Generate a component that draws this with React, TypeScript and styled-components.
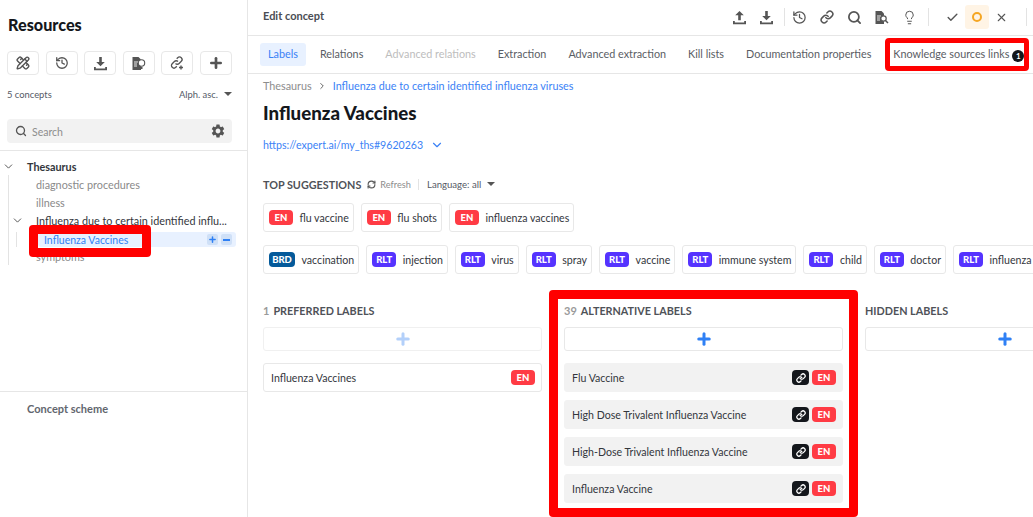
import React from 'react'
import styled, { createGlobalStyle } from 'styled-components'
import {
  Check,
  ChevronDown,
  ChevronRight,
  History,
  Lightbulb,
  Link,
  PencilRuler,
  Plus,
  RefreshCw,
  Search,
  X,
} from 'lucide-react'
import { MdSettings } from 'react-icons/md'

const TABS = [
  { title: 'Labels', active: true },
  { title: 'Relations' },
  { title: 'Advanced relations', disabled: true },
  { title: 'Extraction' },
  { title: 'Advanced extraction' },
  { title: 'Kill lists' },
  { title: 'Documentation properties' },
]

const SUGGESTIONS_LANG = ['flu vaccine', 'flu shots', 'influenza vaccines']

const SUGGESTIONS_RELATED = [
  { tag: 'BRD', title: 'vaccination' },
  { tag: 'RLT', title: 'injection' },
  { tag: 'RLT', title: 'virus' },
  { tag: 'RLT', title: 'spray' },
  { tag: 'RLT', title: 'vaccine' },
  { tag: 'RLT', title: 'immune system' },
  { tag: 'RLT', title: 'child' },
  { tag: 'RLT', title: 'doctor' },
  { tag: 'RLT', title: 'influenza' },
]

const ALTERNATIVE_LABELS = [
  'Flu Vaccine',
  'High Dose Trivalent Influenza Vaccine',
  'High-Dose Trivalent Influenza Vaccine',
  'Influenza Vaccine',
]

const TAG_COLORS: Record<string, string> = {
  EN: '#ff3b44',
  RLT: '#5533ff',
  BRD: '#045a9a',
}

const GlobalStyle = createGlobalStyle`
  html, body {
    margin: 0;
    padding: 0;
    background: #fff;
  }
  body {
    font-family: 'Lato', 'Open Sans', sans-serif;
    color: #1c1f24;
  }
  * {
    box-sizing: border-box;
  }
`

const Page = styled.div`
  position: relative;
  display: flex;
  width: 1033px;
  height: 517px;
  overflow: hidden;
`

const Sidebar = styled.aside`
  display: flex;
  flex-direction: column;
  flex: 0 0 248px;
  border-right: 1px solid #e6e6e6;
`

const SidebarTop = styled.div`
  display: flex;
  flex-direction: column;
  height: 151px;
  padding: 14px 15px 0 7px;
  border-bottom: 1px solid #e6e6e6;
`

const SidebarTitle = styled.h2`
  margin: 0 0 16px 1px;
  font-size: 16.2px;
  line-height: 21px;
  font-weight: 900;
  color: #14171c;
`

const ToolRow = styled.div`
  display: flex;
  gap: 6.6px;
`

const ToolButton = styled.button`
  display: flex;
  align-items: center;
  justify-content: center;
  width: 32px;
  height: 24px;
  padding: 0;
  border: 1px solid #e8e8e8;
  border-radius: 4px;
  background: #fff;
  color: #555;
`

const CountRow = styled.div`
  display: flex;
  align-items: center;
  justify-content: space-between;
  height: 14px;
  margin-top: 12px;
  font-size: 9.4px;
  color: #555a66;
`

const Sort = styled.span`
  display: flex;
  align-items: center;
  gap: 6px;
`

const Caret = styled.span`
  width: 0;
  height: 0;
  border-left: 4px solid transparent;
  border-right: 4px solid transparent;
  border-top: 4px solid #555;
`

const SearchBox = styled.div`
  display: flex;
  align-items: center;
  height: 24px;
  margin-top: 18px;
  padding: 0 6px 0 8px;
  border-radius: 4px;
  background: #f2f2f2;
  color: #555;
`

const SearchText = styled.span`
  flex: 1;
  margin-left: 5px;
  padding-top: 1px;
  font-size: 10.5px;
  color: #8d8d8d;
`

const Tree = styled.div`
  display: flex;
  flex-direction: column;
  height: 241px;
  padding-top: 6px;
  border-bottom: 1px solid #e6e6e6;
`

const TreeRow = styled.div<{ $strong?: boolean; $dim?: boolean; $indent: number }>`
  display: flex;
  align-items: center;
  height: 18px;
  padding-left: ${({ $indent }) => $indent}px;
  font-size: 10.8px;
  font-weight: ${({ $strong }) => ($strong ? 700 : 400)};
  color: ${({ $dim }) => ($dim ? '#8a8a8a' : '#33363c')};
  white-space: nowrap;
`

const TreeChevron = styled.span<{ $slot: number }>`
  display: flex;
  flex: 0 0 ${({ $slot }) => $slot}px;
  color: #555;
`

const TreeGroup = styled.div<{ $left: number }>`
  margin-left: ${({ $left }) => $left}px;
  border-left: 1px solid #e3e3e3;
`

const SelectedRow = styled.div`
  display: flex;
  align-items: center;
  justify-content: space-between;
  height: 15px;
  margin: 3px 11px 0 21px;
  padding: 0 4px 0 6px;
  border-radius: 3px;
  background: #e8f1ff;
  font-size: 10.5px;
  color: #2f80f5;
`

const RowActions = styled.span`
  display: flex;
  gap: 3px;
`

const RowAction = styled.span`
  display: flex;
  align-items: center;
  justify-content: center;
  width: 11px;
  height: 11px;
  border-radius: 2px;
  background: #cfe0f7;
  color: #2f80f5;
`

const Minus = styled.span`
  width: 7px;
  height: 2px;
  background: #2f80f5;
`

const SchemeTitle = styled.div`
  padding: 10px 0 0 27px;
  font-size: 11px;
  font-weight: 700;
  color: #62666e;
`

const Main = styled.main`
  display: flex;
  flex-direction: column;
  flex: 1;
  min-width: 0;
`

const TopBar = styled.div`
  display: flex;
  align-items: center;
  justify-content: space-between;
  flex: 0 0 36px;
  padding: 0 0 1px 15px;
  border-bottom: 1px solid #e6e6e6;
`

const TopTitle = styled.span`
  padding-bottom: 3px;
  font-size: 11px;
  font-weight: 700;
  color: #4a4d54;
`

const TopTools = styled.div`
  display: flex;
  align-items: center;
  height: 100%;
  padding-right: 6px;
`

const TopIcon = styled.span<{ $width?: number }>`
  display: flex;
  align-items: center;
  justify-content: center;
  width: ${({ $width }) => $width ?? 27.5}px;
  height: 24px;
  color: #555;
`

const StatusActive = styled.span`
  display: flex;
  align-items: center;
  justify-content: center;
  width: 24px;
  height: 24px;
  border-radius: 3px;
  background: #fff4e5;
`

const StatusRing = styled.span`
  width: 10px;
  height: 10px;
  border: 2px solid #f5a623;
  border-radius: 50%;
`

const ToolDivider = styled.span<{ $gapLeft: number; $gapRight: number }>`
  width: 1px;
  height: 18px;
  margin: 0 ${({ $gapRight }) => $gapRight}px 0 ${({ $gapLeft }) => $gapLeft}px;
  background: #e3e3e3;
`

const Tabs = styled.nav`
  display: flex;
  align-items: center;
  gap: 6px;
  flex: 0 0 38px;
  padding-left: 12px;
  border-bottom: 1px solid #e6e6e6;
  white-space: nowrap;
`

const Tab = styled.span<{ $active?: boolean; $disabled?: boolean }>`
  display: flex;
  align-items: center;
  height: 23px;
  padding: 0 8px 3px;
  border-radius: 3px;
  font-size: 10.8px;
  background: ${({ $active }) => ($active ? '#e8f1ff' : 'transparent')};
  color: ${({ $active, $disabled }) => ($active ? '#3b82f6' : $disabled ? '#bdbdbd' : '#5a5d64')};
`

const TabCount = styled.span`
  display: flex;
  align-items: center;
  justify-content: center;
  width: 12px;
  height: 12px;
  margin: 5px 0 0 3px;
  border-radius: 50%;
  background: #14171c;
  color: #fff;
  font-size: 8px;
  font-weight: 700;
`

const Content = styled.div`
  display: flex;
  flex-direction: column;
  padding: 4px 0 0 15px;
`

const Breadcrumb = styled.div`
  display: flex;
  align-items: center;
  height: 15px;
  font-size: 10.8px;
  color: #8d8d8d;
`

const CrumbSeparator = styled.span`
  display: flex;
  margin: 0 6px 0 5px;
  color: #666;
`

const CrumbLink = styled.span`
  color: #3b82f6;
`

const ConceptTitle = styled.h1`
  margin: 8px 0 0;
  font-size: 18.7px;
  line-height: 24px;
  font-weight: 900;
  color: #14171c;
`

const UrlRow = styled.div`
  display: flex;
  align-items: center;
  gap: 7px;
  height: 16px;
  margin-top: 12px;
  font-size: 10.6px;
  color: #3b82f6;
`

const SuggestionsHeader = styled.div`
  display: flex;
  align-items: center;
  height: 16px;
  margin-top: 23px;
`

const SectionTitle = styled.span`
  font-size: 10.8px;
  font-weight: 700;
  color: #4f5258;
  white-space: nowrap;
`

const Refresh = styled.span`
  display: flex;
  align-items: center;
  gap: 4px;
  margin-left: 6px;
  font-size: 9.2px;
  color: #8d8d8d;
`

const Language = styled.span`
  display: flex;
  align-items: center;
  gap: 6px;
  margin-left: 7px;
  padding-left: 8px;
  border-left: 1px solid #e3e3e3;
  font-size: 9.6px;
  color: #555a66;
`

const ChipRow = styled.div<{ $top: number }>`
  display: flex;
  gap: 7px;
  margin-top: ${({ $top }) => $top}px;
`

const Chip = styled.div`
  display: flex;
  align-items: center;
  flex: none;
  gap: 6.5px;
  height: 29px;
  padding: 0 4px 0 5px;
  border: 1px solid #e8e8e8;
  border-radius: 3px;
  font-size: 10.6px;
  color: #33363c;
  white-space: nowrap;
`

const Tag = styled.span<{ $kind: string }>`
  display: flex;
  align-items: center;
  justify-content: center;
  flex: none;
  width: ${({ $kind }) => ($kind === 'BRD' ? 26 : 24)}px;
  height: 15px;
  padding-bottom: 1px;
  border-radius: 4px;
  background: ${({ $kind }) => TAG_COLORS[$kind]};
  color: #fff;
  font-size: 9.5px;
  font-weight: 900;
`

const LinkTag = styled.span`
  display: flex;
  align-items: center;
  justify-content: center;
  flex: none;
  width: 17px;
  height: 15px;
  border-radius: 4px;
  background: #14171c;
  color: #fff;
`

const Columns = styled.div`
  display: flex;
  gap: 22px;
  margin-top: 28px;
`

const Column = styled.section`
  display: flex;
  flex-direction: column;
  flex: 0 0 279px;
`

const ColumnHeader = styled.div`
  display: flex;
  align-items: center;
  gap: 4px;
  height: 16px;
`

const ColumnCount = styled.span`
  font-size: 11px;
  font-weight: 700;
  color: #9a9a9a;
`

const AddButton = styled.div<{ $muted?: boolean }>`
  display: flex;
  align-items: center;
  justify-content: center;
  height: 24px;
  margin: 9px 0 12px;
  border: 1px solid ${({ $muted }) => ($muted ? '#f0f0f0' : '#e8e8e8')};
  border-radius: 3px;
  color: ${({ $muted }) => ($muted ? '#b3d0fa' : '#2f80f5')};
`

const LabelList = styled.div`
  display: flex;
  flex-direction: column;
  gap: 8px;
`

const LabelRow = styled.div<{ $filled?: boolean }>`
  display: flex;
  align-items: center;
  justify-content: space-between;
  height: 29px;
  padding: 0 6px 0 7px;
  border: 1px solid ${({ $filled }) => ($filled ? '#f2f2f2' : '#e8e8e8')};
  border-radius: 3px;
  background: ${({ $filled }) => ($filled ? '#f2f2f2' : '#fff')};
  font-size: 10.6px;
  color: #33363c;
`

const LabelTags = styled.span`
  display: flex;
  gap: 3px;
`

const Highlight = styled.div<{
  $left: number
  $top: number
  $width: number
  $height: number
  $border: number
}>`
  position: absolute;
  left: ${({ $left }) => $left}px;
  top: ${({ $top }) => $top}px;
  width: ${({ $width }) => $width}px;
  height: ${({ $height }) => $height}px;
  border: ${({ $border }) => $border}px solid #ff0000;
  border-radius: 4px;
  pointer-events: none;
`

const TrayIcon = ({ down }: { down?: boolean }) => (
  <svg width="15" height="15" viewBox="0 0 15 15" fill="currentColor">
    {down ? (
      <path d="M6.200 1h2.600v5h3l-4.300 4.200L3.200 6h3z" />
    ) : (
      <path d="M7.500 1l4.300 4.200h-3v5H6.200v-5h-3z" />
    )}
    <path d="M1 11h1.800v1.400h9.400V11H14v3.200H1z" />
  </svg>
)

const DocIcon = ({ bulb }: { bulb?: boolean }) => (
  <svg width="15" height="15" viewBox="0 0 15 15">
    <path d="M1.500 1h6l2.500 2.500V14H1.500z" fill="#555" />
    <path d="M3 6h4M3 8h3M3 10h3" stroke="#fff" strokeWidth="0.9" />
    {bulb ? (
      <>
        <circle cx="10.500" cy="7" r="3.200" fill="#fff" stroke="#555" strokeWidth="1.100" />
        <path d="M9.500 11h2v2h-2z" fill="#555" />
      </>
    ) : (
      <>
        <circle cx="9.500" cy="8.500" r="2.700" fill="#fff" stroke="#555" strokeWidth="1.200" />
        <path d="M11.500 10.500l2.500 2.500" stroke="#555" strokeWidth="1.500" />
      </>
    )}
  </svg>
)

const ChainAdd = () => (
  <svg width="16" height="16" viewBox="0 0 16 16" fill="none" stroke="#555" strokeWidth="1.300">
    <path d="M6.500 8.500a2.500 2.500 0 0 0 3.600 0l2.200-2.200a2.500 2.500 0 0 0-3.600-3.600L7.700 3.700" />
    <path d="M9 6.500a2.500 2.500 0 0 0-3.600 0L3.200 8.700a2.500 2.500 0 0 0 3.600 3.600l1-1" />
    <path d="M12 10.500v4M10 12.500h4" strokeWidth="1.400" />
  </svg>
)

const App = () => (
  <>
    <GlobalStyle />
    <Page>
      <Sidebar>
        <SidebarTop>
          <SidebarTitle>Resources</SidebarTitle>
          <ToolRow>
            <ToolButton>
              <PencilRuler size={14} strokeWidth={2.4} />
            </ToolButton>
            <ToolButton>
              <History size={14} strokeWidth={2.2} />
            </ToolButton>
            <ToolButton>
              <TrayIcon down />
            </ToolButton>
            <ToolButton>
              <DocIcon bulb />
            </ToolButton>
            <ToolButton>
              <ChainAdd />
            </ToolButton>
            <ToolButton>
              <Plus size={16} strokeWidth={4} />
            </ToolButton>
          </ToolRow>
          <CountRow>
            <span>5 concepts</span>
            <Sort>
              Alph. asc.
              <Caret />
            </Sort>
          </CountRow>
          <SearchBox>
            <Search size={12} strokeWidth={2.6} />
            <SearchText>Search</SearchText>
            <MdSettings size={16} />
          </SearchBox>
        </SidebarTop>
        <Tree>
          <TreeRow $indent={2} $strong>
            <TreeChevron $slot={25}>
              <ChevronDown size={13} strokeWidth={1.8} />
            </TreeChevron>
            Thesaurus
          </TreeRow>
          <TreeGroup $left={8}>
            <TreeRow $indent={27} $dim>
              diagnostic procedures
            </TreeRow>
            <TreeRow $indent={27} $dim>
              illness
            </TreeRow>
            <TreeRow $indent={2}>
              <TreeChevron $slot={25}>
                <ChevronDown size={13} strokeWidth={1.8} />
              </TreeChevron>
              Influenza due to certain identified influ...
            </TreeRow>
            <TreeGroup $left={7}>
              <SelectedRow>
                Influenza Vaccines
                <RowActions>
                  <RowAction>
                    <Plus size={9} strokeWidth={4} />
                  </RowAction>
                  <RowAction>
                    <Minus />
                  </RowAction>
                </RowActions>
              </SelectedRow>
            </TreeGroup>
            <TreeRow $indent={27} $dim>
              symptoms
            </TreeRow>
          </TreeGroup>
        </Tree>
        <SchemeTitle>Concept scheme</SchemeTitle>
      </Sidebar>
      <Main>
        <TopBar>
          <TopTitle>Edit concept</TopTitle>
          <TopTools>
            <TopIcon>
              <TrayIcon />
            </TopIcon>
            <TopIcon>
              <TrayIcon down />
            </TopIcon>
            <ToolDivider $gapLeft={3} $gapRight={1} />
            <TopIcon>
              <History size={15} strokeWidth={2} />
            </TopIcon>
            <TopIcon>
              <Link size={14} strokeWidth={2.6} />
            </TopIcon>
            <TopIcon>
              <Search size={15} strokeWidth={2.8} />
            </TopIcon>
            <TopIcon>
              <DocIcon />
            </TopIcon>
            <TopIcon>
              <Lightbulb size={15} strokeWidth={1.6} />
            </TopIcon>
            <ToolDivider $gapLeft={5} $gapRight={10} />
            <TopIcon $width={26}>
              <Check size={13} strokeWidth={2.6} />
            </TopIcon>
            <StatusActive>
              <StatusRing />
            </StatusActive>
            <TopIcon $width={24}>
              <X size={13} strokeWidth={2} />
            </TopIcon>
            <ToolDivider $gapLeft={13} $gapRight={0} />
          </TopTools>
        </TopBar>
        <Tabs>
          {TABS.map(({ active, disabled, title }) => (
            <Tab $active={active} $disabled={disabled} key={title}>
              {title}
            </Tab>
          ))}
          <Tab>
            Knowledge sources links
            <TabCount>1</TabCount>
          </Tab>
        </Tabs>
        <Content>
          <Breadcrumb>
            Thesaurus
            <CrumbSeparator>
              <ChevronRight size={10} strokeWidth={2.4} />
            </CrumbSeparator>
            <CrumbLink>Influenza due to certain identified influenza viruses</CrumbLink>
          </Breadcrumb>
          <ConceptTitle>Influenza Vaccines</ConceptTitle>
          <UrlRow>
            https://expert.ai/my_ths#9620263
            <ChevronDown size={14} strokeWidth={2} />
          </UrlRow>
          <SuggestionsHeader>
            <SectionTitle>TOP SUGGESTIONS</SectionTitle>
            <Refresh>
              <RefreshCw size={9} strokeWidth={3} color="#555" />
              Refresh
            </Refresh>
            <Language>
              Language: all
              <Caret />
            </Language>
          </SuggestionsHeader>
          <ChipRow $top={11}>
            {SUGGESTIONS_LANG.map((title) => (
              <Chip key={title}>
                <Tag $kind="EN">EN</Tag>
                {title}
              </Chip>
            ))}
          </ChipRow>
          <ChipRow $top={13}>
            {SUGGESTIONS_RELATED.map(({ tag, title }) => (
              <Chip key={title}>
                <Tag $kind={tag}>{tag}</Tag>
                {title}
              </Chip>
            ))}
          </ChipRow>
          <Columns>
            <Column>
              <ColumnHeader>
                <ColumnCount>1</ColumnCount>
                <SectionTitle>PREFERRED LABELS</SectionTitle>
              </ColumnHeader>
              <AddButton $muted>
                <Plus size={18} strokeWidth={4} />
              </AddButton>
              <LabelList>
                <LabelRow>
                  Influenza Vaccines
                  <Tag $kind="EN">EN</Tag>
                </LabelRow>
              </LabelList>
            </Column>
            <Column>
              <ColumnHeader>
                <ColumnCount>39</ColumnCount>
                <SectionTitle>ALTERNATIVE LABELS</SectionTitle>
              </ColumnHeader>
              <AddButton>
                <Plus size={18} strokeWidth={4} />
              </AddButton>
              <LabelList>
                {ALTERNATIVE_LABELS.map((title) => (
                  <LabelRow $filled key={title}>
                    {title}
                    <LabelTags>
                      <LinkTag>
                        <Link size={10} strokeWidth={3} />
                      </LinkTag>
                      <Tag $kind="EN">EN</Tag>
                    </LabelTags>
                  </LabelRow>
                ))}
              </LabelList>
            </Column>
            <Column>
              <ColumnHeader>
                <SectionTitle>HIDDEN LABELS</SectionTitle>
              </ColumnHeader>
              <AddButton>
                <Plus size={18} strokeWidth={4} />
              </AddButton>
            </Column>
          </Columns>
        </Content>
      </Main>
      <Highlight $left={29} $top={225} $width={122} $height={32} $border={9} />
      <Highlight $left={885} $top={38} $width={144} $height={33} $border={5} />
      <Highlight $left={549} $top={290} $width={309} $height={227} $border={9} />
    </Page>
  </>
)

export default App
